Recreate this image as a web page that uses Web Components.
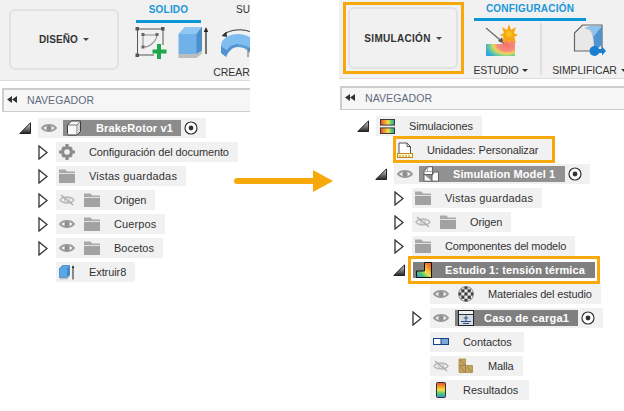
<!DOCTYPE html>
<html lang="es"><head><meta charset="utf-8"><title>Simulación</title>
<style>
html,body{margin:0;background:#fff}
body{font-family:"Liberation Sans",Arial,sans-serif;font-size:11px;color:#333;width:624px;height:411px;overflow:hidden}
</style></head><body>
<app-shell>
  <app-panel slot="left" style="--pw:250px;--pml:0px">
    <tool-bar slot="bar" style="--bh:80px">
      <mode-button style="--mbls:.1px">DISEÑO</mode-button>
      <rib-bon style="--rml:16px;--tab-h:20px">
        <rib-tab slot="tabs" active style="--tw:65px;--tml:1px">SOLIDO</rib-tab>
        <rib-tab slot="tabs" style="--tml:35px">SU</rib-tab>
        <rib-tool slot="tools"><ui-icon name="sketch" style="--s:33px"></ui-icon></rib-tool>
        <rib-tool slot="tools" style="--oml:10px"><ui-icon name="extrude" style="--s:33px"></ui-icon></rib-tool>
        <rib-tool slot="tools" style="--oml:9px;--ow:33px"><ui-icon name="revolve" style="--s:33px"></ui-icon><tool-label slot="label">CREAR</tool-label></rib-tool>
      </rib-bon>
    </tool-bar>
    <nav-header slot="nav" style="--nmt:7px;--nml:2px">NAVEGADOR</nav-header>
    <tree-list slot="tree" style="--pt:6px">
      <tree-row arrow="tri" style="--x:20px;--pr:7px">
        <ui-icon name="eye"></ui-icon>
        <sel-bar style="--sr:8px;--sl:.13px"><ui-icon name="cube" slot="icon"></ui-icon>BrakeRotor v1</sel-bar>
        <ui-icon name="radio" slot="end"></ui-icon>
      </tree-row>
      <tree-row arrow="chev" style="--x:38px"><ui-icon name="gear"></ui-icon><tree-text style="--ls:-.12px">Configuración del documento</tree-text></tree-row>
      <tree-row arrow="chev" style="--x:38px"><ui-icon name="folder"></ui-icon><tree-text style="--ls:.21px">Vistas guardadas</tree-text></tree-row>
      <tree-row arrow="chev" style="--x:38px"><ui-icon name="eyeoff"></ui-icon><ui-icon name="folder"></ui-icon><tree-text style="--ls:-.14px">Origen</tree-text></tree-row>
      <tree-row arrow="chev" style="--x:38px"><ui-icon name="eye"></ui-icon><ui-icon name="folder"></ui-icon><tree-text style="--ls:.11px">Cuerpos</tree-text></tree-row>
      <tree-row arrow="chev" style="--x:38px"><ui-icon name="eye"></ui-icon><ui-icon name="folder"></ui-icon><tree-text>Bocetos</tree-text></tree-row>
      <tree-row arrow="none" style="--x:38px"><ui-icon name="extrude-s"></ui-icon><tree-text style="--ls:-.09px">Extruir8</tree-text></tree-row>
    </tree-list>
  </app-panel>

  <app-panel slot="right" style="--pw:285px;--pml:89px">
    <tool-bar slot="bar" style="--bh:78px">
      <hi-box><mode-button style="--mbm:0;--mbh:62px;--mbls:.3px">SIMULACIÓN</mode-button></hi-box>
      <rib-bon style="--rml:10px;--tab-h:18px">
        <rib-tab slot="tabs" active style="--tw:112px">CONFIGURACIÓN</rib-tab>
        <rib-tool slot="tools" style="--ow:54px"><ui-icon name="study" style="--s:33px"></ui-icon><tool-label slot="label" style="--tls:-.25px">ESTUDIO</tool-label></rib-tool>
        <rib-sep slot="tools"></rib-sep>
        <rib-tool slot="tools" style="--oml:31px;--ow:33px"><ui-icon name="simplify" style="--s:33px"></ui-icon><tool-label slot="label" style="--tls:-.12px">SIMPLIFICAR</tool-label></rib-tool>
      </rib-bon>
    </tool-bar>
    <nav-header slot="nav" style="--nmt:7px;--nml:1px">NAVEGADOR</nav-header>
    <tree-list slot="tree" style="--pt:6px">
      <tree-row arrow="tri" style="--x:19px;--mb:0px;--pl:4px"><ui-icon name="sims" style="--s:15px"></ui-icon><tree-text style="--ls:-.14px">Simulaciones</tree-text></tree-row>
      <tree-row arrow="none" hi style="--x:36px;--mb:1px;--row:27px;--pl:1px;--pr:14px;--aw:18px"><ui-icon name="units"></ui-icon><tree-text style="--ls:-.11px">Unidades: Personalizar</tree-text></tree-row>
      <tree-row arrow="tri" style="--x:37px;--pr:7px">
        <ui-icon name="eye"></ui-icon>
        <sel-bar style="--sp:4px;--sr:10px;--sc:#919191;--sl:.11px"><ui-icon name="simmodel" slot="icon"></ui-icon>Simulation Model 1</sel-bar>
        <ui-icon name="radio" slot="end"></ui-icon>
      </tree-row>
      <tree-row arrow="chev" style="--x:55px"><ui-icon name="folder"></ui-icon><tree-text style="--ls:.21px">Vistas guardadas</tree-text></tree-row>
      <tree-row arrow="chev" style="--x:55px"><ui-icon name="eyeoff"></ui-icon><ui-icon name="folder"></ui-icon><tree-text style="--ls:-.14px">Origen</tree-text></tree-row>
      <tree-row arrow="chev" style="--x:55px;--mb:0px"><ui-icon name="folder"></ui-icon><tree-text style="--ls:-.19px">Componentes del modelo</tree-text></tree-row>
      <tree-row arrow="tri" study style="--x:55px;--aw:14px;--row:28px;--mb:0px">
        <sel-bar style="--sm:0;--sr:10px;--sc:#7f7f7f;--sl:.09px;--gap:13px"><ui-icon name="studysmall" slot="icon"></ui-icon>Estudio 1: tensión térmica</sel-bar>
      </tree-row>
      <tree-row arrow="none" style="--x:73px"><ui-icon name="eye"></ui-icon><ui-icon name="material"></ui-icon><tree-text style="--ls:-.15px">Materiales del estudio</tree-text></tree-row>
      <tree-row arrow="chev" style="--x:73px;--pr:7px">
        <ui-icon name="eye"></ui-icon>
        <sel-bar style="--gap:10px;--sc:#7f7f7f;--sl:.28px"><ui-icon name="load" slot="icon"></ui-icon>Caso de carga1</sel-bar>
        <ui-icon name="radio" slot="end"></ui-icon>
      </tree-row>
      <tree-row arrow="none" style="--x:73px;--pr:12px"><ui-icon name="contacts"></ui-icon><tree-text style="--ls:-.09px">Contactos</tree-text></tree-row>
      <tree-row arrow="none" style="--x:73px"><ui-icon name="eyeoff"></ui-icon><ui-icon name="mesh"></ui-icon><tree-text style="--ls:-.14px">Malla</tree-text></tree-row>
      <tree-row arrow="none" style="--x:73px;--pr:11px"><ui-icon name="results"></ui-icon><tree-text>Resultados</tree-text></tree-row>
    </tree-list>
  </app-panel>
  <flow-arrow slot="over"></flow-arrow>
</app-shell>

<script>
const RB='<stop offset="0" stop-color="#e8453c"/><stop offset=".3" stop-color="#f5a623"/><stop offset=".5" stop-color="#f4e04d"/><stop offset=".7" stop-color="#5fd068"/><stop offset="1" stop-color="#2f8fe0"/>';
const ICONS={
eye:['0 0 16 16','<path d="M1 8C4 4 12 4 15 8C12 12 4 12 1 8Z" fill="#f4f4f4" stroke="#9a9a9a" stroke-width="2"/><circle cx="8" cy="8" r="2.6" fill="#8f8f8f"/>'],
eyeoff:['0 0 16 16','<path d="M1 8C4 4 12 4 15 8C12 12 4 12 1 8Z" fill="none" stroke="#b9b9b9" stroke-width="1.3"/><circle cx="8" cy="8" r="2.4" fill="none" stroke="#b9b9b9"/><path d="M2 3L14 13" stroke="#a9a9a9" stroke-width="1.2"/>'],
folder:['0 0 16 16','<path d="M0 1.5H6.5L8 3.5H16V5H0Z" fill="#a9a9a9"/><path d="M0 5.8H16V15H0Z" fill="#a2a2a2"/>'],
gear:['0 0 16 16','<circle cx="8" cy="8" r="4.4" fill="none" stroke="#8c8c8c" stroke-width="3.2"/><path d="M6.4 0h3.2v3H6.4zM6.4 13h3.2v3H6.4zM0 6.4h3v3.2H0zM13 6.4h3v3.2h-3z" fill="#8c8c8c"/><path d="M2.2 4.4L4.4 2.2 6 3.8 3.8 6zM13.8 4.4L11.6 2.2 10 3.8 12.2 6zM2.2 11.6L4.4 13.8 6 12.2 3.8 10zM13.8 11.6L11.6 13.8 10 12.2 12.2 10z" fill="#8c8c8c"/>'],
cube:['0 0 16 16','<path d="M1.5 5L5.5 1H14.5V11.5L11 15H3C2 15 1.5 14.5 1.5 13.5Z" fill="#f7f7f7" stroke="#3c3c3c"/><path d="M11 15V5H1.5M11 5L14.5 1" fill="none" stroke="#777"/><path d="M11.5 5.5L14 3V11L11.5 14Z" fill="#d5d5d5"/>'],
radio:['0 0 16 16','<circle cx="8" cy="8" r="6" fill="#fff" stroke="#333" stroke-width="1.2"/><circle cx="8" cy="8" r="2.4" fill="#333"/>'],
'extrude-s':['0 0 16 16','<path d="M0.5 13.5V4.5L3.5 1.5H10.5V11L8 13.5Z" fill="#5ba7e3" stroke="#3d86c4" stroke-width=".8"/><path d="M8 13.5V4.5L10.5 1.5V11Z" fill="#3f88c6"/><path d="M0.5 14H8L10.5 12V13.5L8 15.5H0.5Z" fill="#c8c8c8"/><path d="M14 15.5V3" stroke="#222"/><path d="M12.7 4L14 1L15.3 4Z" fill="#222"/>'],
sketch:['0 0 33 33','<path d="M2.5 3H28M2.5 3V29H19M28 3V19" fill="none" stroke="#555" stroke-width="1"/><rect x="0.5" y="1" width="3.5" height="3.5" fill="#555"/><rect x="26" y="1" width="3.5" height="3.5" fill="#555"/><rect x="0.5" y="27.5" width="3.5" height="3.5" fill="#555"/><path d="M8 9V21H9M8 9H22" fill="none" stroke="#8a8a8a" stroke-width="1"/><path d="M22 9C21.5 15 15 21 9 21" fill="none" stroke="#999" stroke-width="1.2"/><rect x="6.5" y="7" width="3" height="3" fill="#666"/><rect x="20.5" y="7" width="3" height="3" fill="#666"/><rect x="6.5" y="19.5" width="3" height="3" fill="#666"/><path d="M22 18H26V23.500H31.500V27.500H26V33H22V27.500H17.500V23.500H22Z" fill="#1fa84b"/>'],
extrude:['0 0 33 33','<path d="M0.500 8L7 1H24V24.500L18.500 28H0.500Z" fill="#6fb1e8"/><path d="M0.500 8L7 1H24L18.500 8Z" fill="#90c6f2"/><path d="M18.500 8L24 1V24.500L18.500 28Z" fill="#4d8fc9"/><path d="M0.500 28H18.500L24 24.500V27.500L18.500 32H0.500Z" fill="#bdbdbd"/><path d="M28 28V4" stroke="#222" stroke-width="1.2"/><path d="M25.800 6L28 1L30.200 6Z" fill="#222"/>'],
revolve:['0 0 33 33','<path d="M1 20C1 12 10 8 18 8C25 8 31 11 33 14V24C29 20 24 18 18 18C13 18 9 20 7 24Z" fill="#7fbdf0"/><path d="M1 20V27L6 31C8 26 12 21 18 21V18C13 18 9 20 7 24Z" fill="#4f93d0"/><path d="M18 18C24 18 29 20 33 24V27H30C27 23 23 21 18 21Z" fill="#5aa0dc"/><path d="M3 9C10 3 24 2 33 7" fill="none" stroke="#333"/><path d="M1.500 10L6.500 5.500L7 11Z" fill="#333"/><path d="M28 31V25C29 22 31 22 33 23" fill="none" stroke="#666"/>'],
study:['0 0 33 33','<defs><radialGradient id="h" cx=".72" cy=".42" r=".78"><stop offset="0" stop-color="#f47070"/><stop offset=".42" stop-color="#f59079"/><stop offset=".58" stop-color="#f3d35b"/><stop offset=".74" stop-color="#7fd38c"/><stop offset="1" stop-color="#2fa6dc"/></radialGradient></defs><path d="M1 32V20H18V13H30V32Z" fill="url(#h)"/><path d="M1 4L17 17.500" stroke="#6b6b6b" stroke-width="1.300"/><path d="M13 17L19 20L17 13.500Z" fill="#555"/><path d="M24 0L26 6L31 3L29 9L33 11L29 13L31 19L26 16L24 20L22 16L17 19L19 13L15 11L19 9L17 3L22 6Z" fill="#f7a70f"/><circle cx="24" cy="10" r="3" fill="#fbc022"/>'],
simplify:['0 0 33 33','<path d="M1.500 9L9.500 1H29V27H1.500Z" fill="#e8e8e8" stroke="#666" stroke-width="1.200"/><path d="M17 2H29L20 13C19 8 18 5 12 4Z" fill="#8cc4ef"/><path d="M20 13L29 2V21L21 27C21 22 21 17 20 13Z" fill="#4f93cf"/><path d="M12 4C18 5 19 8 20 13" fill="none" stroke="#bcbcbc"/><circle cx="21.500" cy="27" r="5" fill="#1b7fd1"/><path d="M26 25H29V22.500L33 27L29 31.500V29H26Z" fill="#1b7fd1"/>'],
sims:['0 0 16 16','<defs><linearGradient id="a" x2="1" y2="0"><stop offset="0" stop-color="#e8453c"/><stop offset=".3" stop-color="#f59b2b"/><stop offset=".55" stop-color="#f5e04d"/><stop offset=".8" stop-color="#59c86a"/><stop offset="1" stop-color="#3a8fe0"/></linearGradient></defs><rect x=".5" y=".5" width="15" height="6" fill="url(#a)" stroke="#333"/><rect x=".5" y="9.500" width="15" height="6" fill="url(#a)" stroke="#333"/>'],
units:['0 0 16 16','<path d="M2 11.500V1H10L13.500 4.500V11.500" fill="#fff" stroke="#555"/><path d="M10 1V4.500H13.500" fill="none" stroke="#555"/><rect x="0.500" y="11.500" width="15" height="4" fill="#fff6d6" stroke="#c48a10"/><path d="M3 13V15M6 13V15M9 13V15M12 13V15" stroke="#c48a10"/>'],
simmodel:['0 0 16 16','<path d="M1 5.500L4.500 .8H9.500L9.500 8.500H1ZM1 8.500V15.200H9M9 15.200V9L11.500 6H15.500V15.200Z" fill="#fafafa" stroke="#555" stroke-width=".9"/><path d="M4.500 .8V5.500H1M4.500 5.500H9.500" fill="none" stroke="#888" stroke-width=".7"/>'],
studysmall:['0 0 16 16','<defs><linearGradient id="s" x1="1" y1="0" x2="0" y2="1"><stop offset="0" stop-color="#e8453c"/><stop offset=".3" stop-color="#f59b2b"/><stop offset=".5" stop-color="#f0e04d"/><stop offset=".7" stop-color="#55c870"/><stop offset="1" stop-color="#2f8fe0"/></linearGradient></defs><path d="M0.500 15.500V9H8.500V0.500H15.500V15.500Z" fill="url(#s)" stroke="#111"/>'],
material:['0 0 16 16','<defs><pattern id="c" width="6.400" height="6.400" patternUnits="userSpaceOnUse"><rect width="6.400" height="6.400" fill="#eaeaea"/><rect width="3.200" height="3.200" fill="#3d3d3d"/><rect x="3.200" y="3.200" width="3.200" height="3.200" fill="#3d3d3d"/></pattern></defs><circle cx="8" cy="8" r="7.500" fill="url(#c)" stroke="#555" stroke-width=".6"/>'],
load:['0 0 16 16','<rect x=".5" y=".5" width="15" height="15" fill="#d5dbe6" stroke="#222"/><rect x="1" y="1" width="14" height="3" fill="#eef0f4"/><path d="M1 4.500H15" stroke="#333"/><path d="M8 5.500V11M5.800 8H10.200M3 11.500H13M5 13.500H11" stroke="#2b4d80" stroke-width="1"/>'],
contacts:['0 0 16 16','<rect x=".5" y="4.500" width="15" height="6" fill="#fff" stroke="#17408c"/><rect x="8" y="5" width="7" height="5" fill="#7ea6d8"/><path d="M8 4.500V10.500" stroke="#17408c"/>'],
mesh:['0 0 16 16','<path d="M1 1H7.500V7.500H14.500V14.500H1Z" fill="#c1a45d" stroke="#a98a45" stroke-width=".8"/><path d="M1 7.500H7.500V14.500M2 2L7 7M2 9L7 14M9 9L14 14" fill="none" stroke="#94783a" stroke-width=".7"/>'],
results:['0 0 16 16','<defs><linearGradient id="r" x2="0" y2="1">'+RB+'</linearGradient></defs><rect x="3.500" y=".5" width="9" height="15" fill="url(#r)" stroke="#333" rx="1"/>']
};
function def(name,html,extra){
  const tpl=document.createElement('template');tpl.innerHTML=html;
  customElements.define(name,class extends HTMLElement{
    constructor(){super();this.attachShadow({mode:'open'}).appendChild(tpl.content.cloneNode(true));}
    connectedCallback(){if(extra)extra(this);}
  });
}
def('app-shell',`<style>:host{display:flex;position:relative;width:624px;height:411px;overflow:hidden;background:#fff}
::slotted([slot=over]){position:absolute;left:234px;top:170px}</style>
<slot name="left"></slot><slot name="right"></slot><slot name="over"></slot>`);
def('app-panel',`<style>:host{display:flex;flex-direction:column;flex:none;width:var(--pw);margin-left:var(--pml);height:411px;overflow:hidden}</style>
<slot name="bar"></slot><slot name="nav"></slot><slot name="tree"></slot>`);
def('tool-bar',`<style>:host{display:flex;flex:none;height:var(--bh);background:#f1f1f1;border-bottom:1px solid #dcdcdc;overflow:hidden}</style><slot></slot>`);
def('mode-button',`<style>:host{display:flex;align-items:center;justify-content:center;gap:5px;box-sizing:border-box;flex:none;width:110px;height:var(--mbh,61px);margin:var(--mbm,9px 0 0 9px);background:#f1f1f1;border:2px solid #e2e2e2;border-radius:6px;font:bold 10px "Liberation Sans",Arial,sans-serif;letter-spacing:var(--mbls,0);color:#333}
i{width:0;height:0;border:3px solid transparent;border-top:3.5px solid #444;border-bottom:0}</style><slot></slot><i></i>`);
def('hi-box',`<style>:host{display:block;flex:none;align-self:flex-start;margin:2px 0 0 4px;padding:2px 3px 2px 2px;border:3px solid #f7a90c;background:#f1f1f1}</style><slot></slot>`);
def('rib-bon',`<style>:host{display:flex;flex-direction:column;flex:none;margin-left:var(--rml)}
.t,.o{display:flex}.o{flex:1}</style><div class="t"><slot name="tabs"></slot></div><div class="o"><slot name="tools"></slot></div>`);
def('rib-tab',`<style>:host{display:block;flex:none;width:var(--tw,auto);margin-left:var(--tml,0);height:calc(var(--tab-h) + 4px);font:10px "Liberation Sans",Arial,sans-serif;letter-spacing:.2px;color:#333;text-align:center;white-space:nowrap;line-height:var(--tab-h)}
:host([active]){color:#1b96d8;font-weight:bold}
b{display:none;height:3px;background:#0b96d8}:host([active]) b{display:block}</style><slot></slot><b></b>`);
def('rib-tool',`<style>:host{display:flex;flex-direction:column;align-items:center;flex:none;width:var(--ow,auto);margin-left:var(--oml,0);padding-top:2px}
::slotted([slot=label]){margin-top:6px}</style><slot></slot><slot name="label"></slot>`);
def('rib-sep',`<style>:host{display:block;flex:none;width:2px;height:52px;margin:1px 0 0 12px;background:#dedede}</style>`);
def('tool-label',`<style>:host{display:flex;align-items:center;gap:4px;height:14px;white-space:nowrap;font:10.5px "Liberation Sans",Arial,sans-serif;letter-spacing:var(--tls,0);color:#333}
i{width:0;height:0;border:3px solid transparent;border-top:3.5px solid #333;border-bottom:0}</style><slot></slot><i></i>`);
def('nav-header',`<style>:host{display:flex;align-items:center;box-sizing:border-box;flex:none;height:24px;margin:var(--nmt) 0 0 var(--nml);padding:0 0 2px 3px;background:#f6f6f6;border:solid #cdcdcd;border-width:2px 0 1.5px 2px;font:10.5px "Liberation Sans",Arial,sans-serif;letter-spacing:.1px;color:#5f6a7c}
svg{width:10px;height:7px;margin-right:10px}</style><svg viewBox="0 0 10 7"><path d="M5 0V7L0 3.500ZM10 0V7L5 3.500Z" fill="#333"/></svg><slot></slot>`);
def('tree-list',`<style>:host{display:flex;flex-direction:column;align-items:flex-start;padding-top:var(--pt)}</style><slot></slot>`);
def('tree-text',`<style>:host{display:block;margin-left:5px;white-space:nowrap;font:11px "Liberation Sans",Arial,sans-serif;letter-spacing:var(--ls,.03px);color:#333}</style><slot></slot>`);
def('tree-row',`<style>:host{display:flex;align-items:stretch;flex:none;height:var(--row,20px);margin:0 0 var(--mb,4px) var(--x)}
.a{flex:none;width:var(--aw,18px);display:flex;align-items:center}
.a svg{display:block}
.c{display:flex;align-items:center;gap:9px;background:#f1f1f1;padding:0 var(--pr,9px) 0 var(--pl,3px)}
:host([hi]) .c{border:3px solid #f7a90c;box-sizing:border-box}
:host([study]) .c{border:3px solid #f7a90c;background:#fff;padding:3px 2px}
::slotted([slot=end]){margin-left:-7px}</style>
<div class="a"></div><div class="c"><slot></slot><slot name="end"></slot></div>`,el=>{
  const k=el.getAttribute('arrow'),a=el.shadowRoot.querySelector('.a');
  if(k==='tri')a.innerHTML='<svg width="12" height="12" viewBox="0 0 12 12" style="margin-left:-1px"><defs><linearGradient id="t" x2="0" y2="1"><stop offset="0" stop-color="#ddd"/><stop offset="1" stop-color="#222"/></linearGradient></defs><path d="M11.500 .8V11.500H.8Z" fill="url(#t)" stroke="#222"/></svg>';
  if(k==='chev')a.innerHTML='<svg width="10" height="15" viewBox="0 0 10 15"><path d="M1 1L9 7.500L1 14Z" fill="#fff" stroke="#333" stroke-width="1.300"/></svg>';
});
def('sel-bar',`<style>:host{display:flex;align-items:center;flex:none;height:16px;margin:0 0 0 var(--sm,-3px);padding:0 var(--sr,9px) 0 var(--sp,3px);background:var(--sc,#8c8c8c);color:#fff;font:bold 11px "Liberation Sans",Arial,sans-serif;letter-spacing:var(--sl,.28px);white-space:nowrap}
::slotted([slot=icon]){margin-right:var(--gap,14px)}</style><slot name="icon"></slot><slot></slot>`);
def('flow-arrow',`<style>:host{display:block;width:100px;height:22px}svg{display:block}</style><svg width="100" height="22" viewBox="0 0 100 22"><path d="M3 11H80" stroke="#f7a90c" stroke-width="6" stroke-linecap="round"/><path d="M79 0L99 11L79 22Z" fill="#f7a90c"/></svg>`);
customElements.define('ui-icon',class extends HTMLElement{
  constructor(){super();this.attachShadow({mode:'open'});}
  connectedCallback(){const [vb,d]=ICONS[this.getAttribute('name')];
    this.shadowRoot.innerHTML=`<style>:host{display:block;flex:none;width:var(--s,16px);height:var(--s,16px)}svg{display:block;width:100%;height:100%}</style><svg viewBox="${vb}">${d}</svg>`;}
});
</script>
</body></html>
